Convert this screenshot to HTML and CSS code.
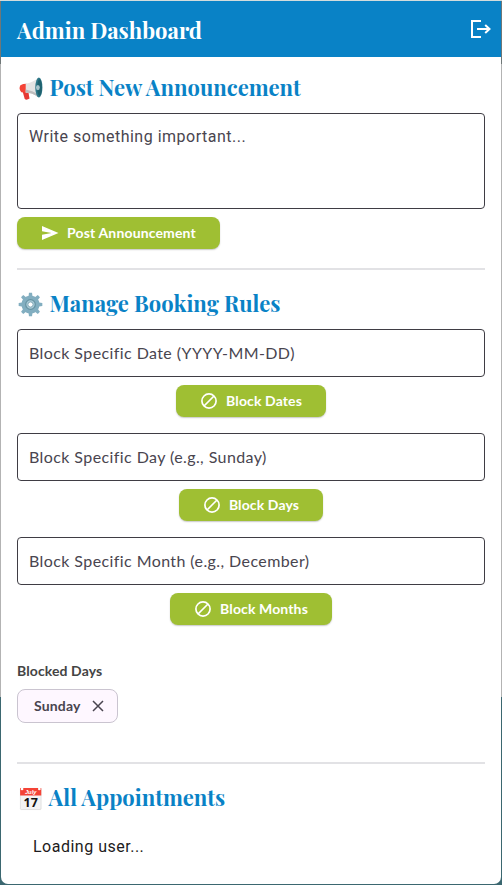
FILE: index.html
```html
<!DOCTYPE html>
<html lang="en">
<head>
<meta charset="utf-8">
<title>Admin Dashboard</title>
<link rel="stylesheet" href="styles.css">
</head>
<body>
<svg class="defs" width="0" height="0">
  <symbol id="block" viewBox="0 0 18 18"><circle cx="9" cy="9" r="7.1" fill="none" stroke="currentColor" stroke-width="1.7"/><path d="M4 14L14 4" stroke="currentColor" stroke-width="1.7"/></symbol>
</svg>
<div class="window">
  <header class="bar">
    <h1 class="title">Admin Dashboard</h1>
    <svg class="logout" viewBox="0 0 24 24" fill="none" stroke="#fff" stroke-width="2"><path d="M12 4H3V20H12M8 12H20.5M16.2 8L20.5 12L16.2 16"/></svg>
  </header>
  <main class="content">
    <h2 class="heading">
      <svg class="emoji" viewBox="0 0 26 26"><path d="M4.5 15L10.5 15L12 23.5Q9 25.5 7 24Z" fill="#e53935"/><path d="M2.5 9.5Q5 8 9 8V17.5L3.5 17Q.3 13 2.5 9.5Z" fill="#f44336"/><path d="M8 8Q15 7 21 2V22Q15 17.5 8 17.5Z" fill="#e4e4e4"/><path d="M8 14Q15 15 21 19V22Q15 17.5 8 17.5Z" fill="#bdbdbd"/><ellipse cx="21.7" cy="12" rx="3.7" ry="10.4" fill="#2f7889"/><ellipse cx="22.4" cy="12" rx="2.5" ry="8.7" fill="#1f626f"/><ellipse cx="20.7" cy="12" rx="2" ry="2.7" fill="#a8c4cc"/></svg>
      <span>Post New Announcement</span>
    </h2>
    <div class="field area">Write something important...</div>
    <div class="button post"><svg viewBox="0 0 18 18"><path d="M1 2L17.5 9L1 16V10.8L10.5 9L1 7.2Z" fill="currentColor"/></svg><span>Post Announcement</span></div>
    <div class="divider"></div>
    <h2 class="heading rules">
      <svg class="emoji" viewBox="0 0 26 26"><g fill="#82aec0"><circle cx="13" cy="13" r="9.4"/><path d="M11 4L11.4 .7H14.6L15 4V22L14.6 25.3H11.4L11 22Z"/><path d="M11 4L11.4 .7H14.6L15 4V22L14.6 25.3H11.4L11 22Z" transform="rotate(45 13 13)"/><path d="M11 4L11.4 .7H14.6L15 4V22L14.6 25.3H11.4L11 22Z" transform="rotate(90 13 13)"/><path d="M11 4L11.4 .7H14.6L15 4V22L14.6 25.3H11.4L11 22Z" transform="rotate(135 13 13)"/></g><circle cx="13" cy="13" r="5" fill="#a9cbd7" stroke="#6793a3" stroke-width="1.3"/><circle cx="13" cy="13" r="2.7" fill="#fff" stroke="#7ea6b5" stroke-width="1"/></svg>
      <span>Manage Booking Rules</span>
    </h2>
    <div class="field">Block Specific Date (YYYY-MM-DD)</div>
    <div class="button dates"><svg><use href="#block"/></svg><span>Block Dates</span></div>
    <div class="field">Block Specific Day (e.g., Sunday)</div>
    <div class="button days"><svg><use href="#block"/></svg><span>Block Days</span></div>
    <div class="field">Block Specific Month (e.g., December)</div>
    <div class="button months"><svg><use href="#block"/></svg><span>Block Months</span></div>
    <h3 class="label">Blocked Days</h3>
    <div class="chip"><span>Sunday</span><svg viewBox="0 0 12 12"><path d="M1 1L11 11M11 1L1 11" stroke="#49454f" stroke-width="1.5"/></svg></div>
    <div class="divider second"></div>
    <h2 class="heading appointments">
      <svg class="emoji" viewBox="0 0 26 26"><rect x="2.5" y="2.5" width="21.5" height="22" rx="1" fill="#f3f3f3" stroke="#cfcfcf" stroke-width=".6"/><path d="M2.2 2H24.2V10H2.2Z" fill="#f44336"/><circle cx="4.2" cy="3" r="1.4" fill="#fff"/><circle cx="22.2" cy="3" r="1.4" fill="#fff"/><text x="13.2" y="8.6" class="month">July</text><text x="13.2" y="21.8" class="day">17</text></svg>
      <span class="h-app">All Appointments</span>
    </h2>
    <p class="loading">Loading user...</p>
  </main>
</div>
</body>
</html>
```
FILE: styles.css
```css
* { box-sizing: border-box; }
body {
  margin: 0;
  height: 885px;
  padding: 1px 1px 1px;
  overflow: hidden;
  background: linear-gradient(#d3dcdc 0 1px, #6f7777 1px 64px, #b3b3b3 64px 697px, #3b6770 697px);
  font-family: Lato, sans-serif;
}
.defs { display: block; }
.window {
  height: 883px;
  background: #fff;
  border-radius: 0 0 7px 7px;
  overflow: hidden;
}
.bar {
  height: 56px;
  padding: 0 8px 0 16px;
  display: flex;
  align-items: center;
  justify-content: space-between;
  background: #0982c6;
}
.title, .heading {
  margin: 0;
  font-family: "Playfair Display", "Liberation Serif", serif;
  font-weight: 700;
  white-space: nowrap;
}
.title { font-size: 22px; line-height: 32px; color: #fff; padding-top: 1px; }
.logout { width: 24px; height: 24px; }
.content { padding: 16px 16px 0; }
.heading {
  display: flex;
  align-items: center;
  height: 30px;
  font-size: 22px;
  line-height: 28px;
  color: #0982c6;
}
.heading span { padding-bottom: 3px; }
.emoji { width: 25px; height: 25px; flex: none; margin: 0 6.5px 0 1px; }
.heading .h-app { margin-left: -1px; }
.month { font: italic bold 6px "Liberation Sans", sans-serif; fill: #fff; text-anchor: middle; }
.day { font: bold 13px "Open Sans", sans-serif; fill: #111; text-anchor: middle; }
.field {
  height: 48px;
  padding: 0 11px;
  border: 1px solid #3f3d44;
  border-radius: 4px;
  font-size: 16px;
  line-height: 46px;
  letter-spacing: .41px;
  color: #49454f;
  white-space: nowrap;
}
.heading + .field { margin-top: 10px; }
.area { height: 96px; font-family: Roboto, sans-serif; line-height: 45px; letter-spacing: .5px; }
.button {
  height: 32px;
  margin: 8px auto 16px;
  display: flex;
  align-items: center;
  justify-content: center;
  gap: 8px;
  border-radius: 8px;
  background: #9fbf33;
  box-shadow: 0 1px 1.5px rgba(0, 0, 0, .22);
  color: #fff;
  font-size: 14px;
  font-weight: 700;
  line-height: 20px;
  letter-spacing: .12px;
  white-space: nowrap;
}
.button svg { width: 18px; height: 18px; flex: none; }
.post { width: 203px; margin: 8px 0 19px; letter-spacing: .15px; }
.dates { width: 150px; }
.days { width: 144px; }
.months { width: 162px; }
.divider { height: 2px; background: #e2e2e5; }
.rules { margin-top: 19px; }
.label { margin: 36px 0 8px; font-size: 14px; line-height: 20px; font-weight: 700; letter-spacing: .1px; color: #444; }
.chip {
  width: 101px;
  height: 34px;
  padding: 0 13px 0 16px;
  display: flex;
  align-items: center;
  justify-content: space-between;
  border: 1px solid #cac4d0;
  border-radius: 8px;
  background: #fef7ff;
  color: #49454f;
  font-size: 14px;
  font-weight: 700;
  letter-spacing: .15px;
}
.chip span { padding-bottom: 2px; }
.chip svg { width: 12px; height: 12px; }
.second { margin-top: 39px; }
.appointments { margin-top: 19px; }
.loading {
  margin: 22px 16px 0;
  font: 400 16px/24px Roboto, sans-serif;
  letter-spacing: .5px;
  color: #1d1b20;
}
```
